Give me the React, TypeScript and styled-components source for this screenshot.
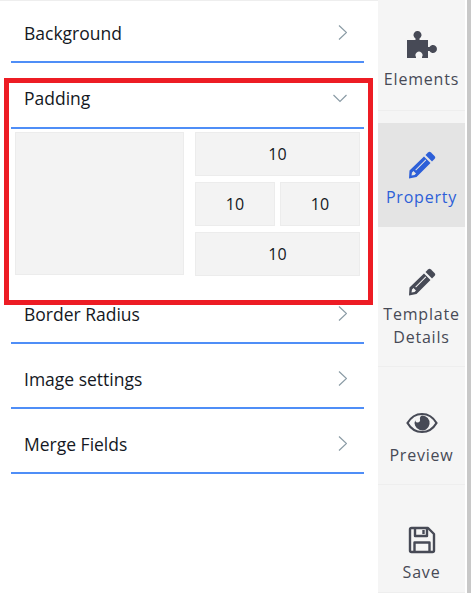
import { createGlobalStyle } from 'styled-components';
import styled from 'styled-components';
import { ReactNode } from 'react';

const GlobalStyle = createGlobalStyle`
  html, body {
    margin: 0;
    height: 100%;
    background: #fff;
    overflow: hidden;
  }
`

const Page = styled.div`
  position: relative;
  display: flex;
  width: 471px;
  height: 593px;
  overflow: hidden;
  font-family: "Open Sans", sans-serif;
  color: #141823;
`

const Panel = styled.section`
  width: 378px;
  flex: none;
  padding: 1px 14px 0 11px;
  box-sizing: border-box;
  border-top: 1px solid #eee;
`

const SectionHead = styled.div<{ $lift?: boolean }>`
  display: flex;
  align-items: center;
  justify-content: space-between;
  height: ${p => (p.$lift ? 59 : 57)}px;
  padding: ${p => (p.$lift ? 0 : 2)}px 17px 0 13px;
  border-bottom: 2px solid #4f8ef7;
  margin-bottom: 4px;
  font-size: 17.5px;
  line-height: 24px;
`

const PaddingSection = styled.div`
  padding-top: 1px;
`

const PaddingBody = styled.div`
  display: grid;
  grid-template-columns: 169px 165px;
  justify-content: space-between;
  align-items: start;
  padding: 0 4px;
  height: 151px;
  margin-top: -1px;
`

const Preview = styled.div`
  height: 143px;
  background: #f3f3f3;
  border: 1px solid #ececec;
  box-sizing: border-box;
`

const Fields = styled.div`
  display: grid;
  grid-template-columns: 80px 80px;
  grid-auto-rows: 44px;
  justify-content: space-between;
  row-gap: 6px;
`

const Field = styled.div<{ $wide?: boolean }>`
  grid-column: ${p => (p.$wide ? '1 / -1' : 'auto')};
  display: flex;
  align-items: center;
  justify-content: center;
  background: #f3f3f3;
  border: 1px solid #ececec;
  font-size: 16px;
`

const Highlight = styled.div`
  position: absolute;
  left: 4px;
  top: 78px;
  width: 369px;
  height: 227px;
  box-sizing: border-box;
  border: 5px solid #ed1c24;
  pointer-events: none;
`

const Rail = styled.nav`
  width: 87px;
  flex: none;
  background: #f5f5f5;
  display: flex;
  flex-direction: column;
`

const RailItem = styled.div<{ $active?: boolean; $height: number; $gap?: number; $pad: number }>`
  height: ${p => p.$height}px;
  flex: none;
  margin-bottom: ${p => p.$gap ?? 0}px;
  box-sizing: border-box;
  display: flex;
  flex-direction: column;
  align-items: center;
  padding-top: ${p => p.$pad}px;
  border-bottom: 1px solid ${p => (p.$active ? 'transparent' : '#eeeeee')};
  background: ${p => (p.$active ? '#e4e4e4' : 'transparent')};
  color: ${p => (p.$active ? '#2d5fd8' : '#474a56')};
  font-size: 16px;
  line-height: 23px;
  letter-spacing: 0.8px;
  text-align: center;
`

const IconSlot = styled.div`
  height: 32px;
  display: flex;
  align-items: center;
  justify-content: center;
  margin-bottom: 4.5px;
`

const Scroll = styled.div`
  width: 4px;
  margin-left: 2px;
  background: #c8c8c8;
`

const Chevron = ({ open }: { open?: boolean }) => (
  <svg width="14" height="15" viewBox="0 0 14 15" fill="none" stroke="#8a9ba5" strokeWidth="1.2">
    {open ? <path d="M0.5 5 L7 11.5 L13.5 5" /> : <path d="M6 0.5 L13.5 7.5 L6 14.5" />}
  </svg>
)

const Puzzle = () => (
  <svg width="30" height="32" viewBox="0 0 30 32" fill="currentColor">
    <path d="M0 9 H8.500 V7.500 A4 4 0 1 1 12.500 7.500 V9 H21 V16 H22.500 A4 4 0 1 1 22.500 20 H21 V27 H15 V26 A3.500 3.500 0 1 0 9 26 V27 H0 Z" />
  </svg>
)

const Pencil = () => (
  <svg width="28" height="28" viewBox="0 0 28 28" fill="currentColor">
    <path d="M20 1.500 C21 0.500 22 0.500 23 1.500 L26.500 5 C27.500 6 27.500 7 26.500 8 L24 10.500 L17.500 4 Z" />
    <path d="M16 5.500 L22.500 12 L8.500 26 L1 27.500 L1.500 19.500 Z M5.500 20 L4 21.500 L3.500 24.500 L6.500 24 L8 22.500 Z M17.500 8.500 L18.200 9.200 L8 19.400 L7.300 18.700 Z" fillRule="evenodd" />
  </svg>
)

const Eye = () => (
  <svg width="32" height="22" viewBox="0 0 32 22" fill="none">
    <path d="M1.500 11 C5 5 10 2 16 2 C22 2 27 5 30.500 11 C27 17 22 20 16 20 C10 20 5 17 1.500 11 Z" stroke="currentColor" strokeWidth="2.200" />
    <path d="M16 3.500 A7.500 7.500 0 1 1 9.500 7.500 C9 9 9.500 10.500 11.500 10.500 C13.500 10.500 14.500 9 14 7.500 C13.500 5.500 14.500 4 16 3.500 Z" fill="currentColor" />
  </svg>
)

const Floppy = () => (
  <svg width="28" height="28" viewBox="0 0 28 28" fill="none" stroke="currentColor" strokeWidth="2.400" strokeLinejoin="round">
    <path d="M2 3.500 C2 2.500 2.500 2 3.500 2 H20 L26 8 V24.500 C26 25.500 25.500 26 24.500 26 H3.500 C2.500 26 2 25.500 2 24.500 Z" />
    <path d="M7 2 V10 H19 V2" />
    <path d="M6.500 26 V16.500 H21.500 V26" />
    <path d="M15.500 4 V8" />
  </svg>
)

const sections = ['Border Radius', 'Image settings', 'Merge Fields']

const railItems: { label: ReactNode; icon: ReactNode; height: number; pad: number; gap?: number; active?: boolean }[] = [
  { label: 'Elements', icon: <Puzzle />, height: 111, pad: 31, gap: 12 },
  { label: 'Property', icon: <Pencil />, height: 104, pad: 26, active: true },
  { label: <>Template<br />Details</>, icon: <Pencil />, height: 140, pad: 39 },
  { label: 'Preview', icon: <Eye />, height: 118, pad: 40 },
  { label: 'Save', icon: <Floppy />, height: 108, pad: 39 },
]

function App() {
  return (
    <Page>
      <GlobalStyle />
      <Panel>
        <SectionHead>Background<Chevron /></SectionHead>
        <PaddingSection>
          <SectionHead $lift>Padding<Chevron open /></SectionHead>
          <PaddingBody>
            <Preview />
            <Fields>
              <Field $wide>10</Field>
              <Field>10</Field>
              <Field>10</Field>
              <Field $wide>10</Field>
            </Fields>
          </PaddingBody>
        </PaddingSection>
        {sections.map(title => (
          <SectionHead key={title}>{title}<Chevron /></SectionHead>
        ))}
      </Panel>
      <Rail>
        {railItems.map((item, i) => (
          <RailItem key={i} $height={item.height} $pad={item.pad} $gap={item.gap} $active={item.active}>
            <IconSlot>{item.icon}</IconSlot>
            <div>{item.label}</div>
          </RailItem>
        ))}
      </Rail>
      <Scroll />
      <Highlight />
    </Page>
  )
}

export default App
